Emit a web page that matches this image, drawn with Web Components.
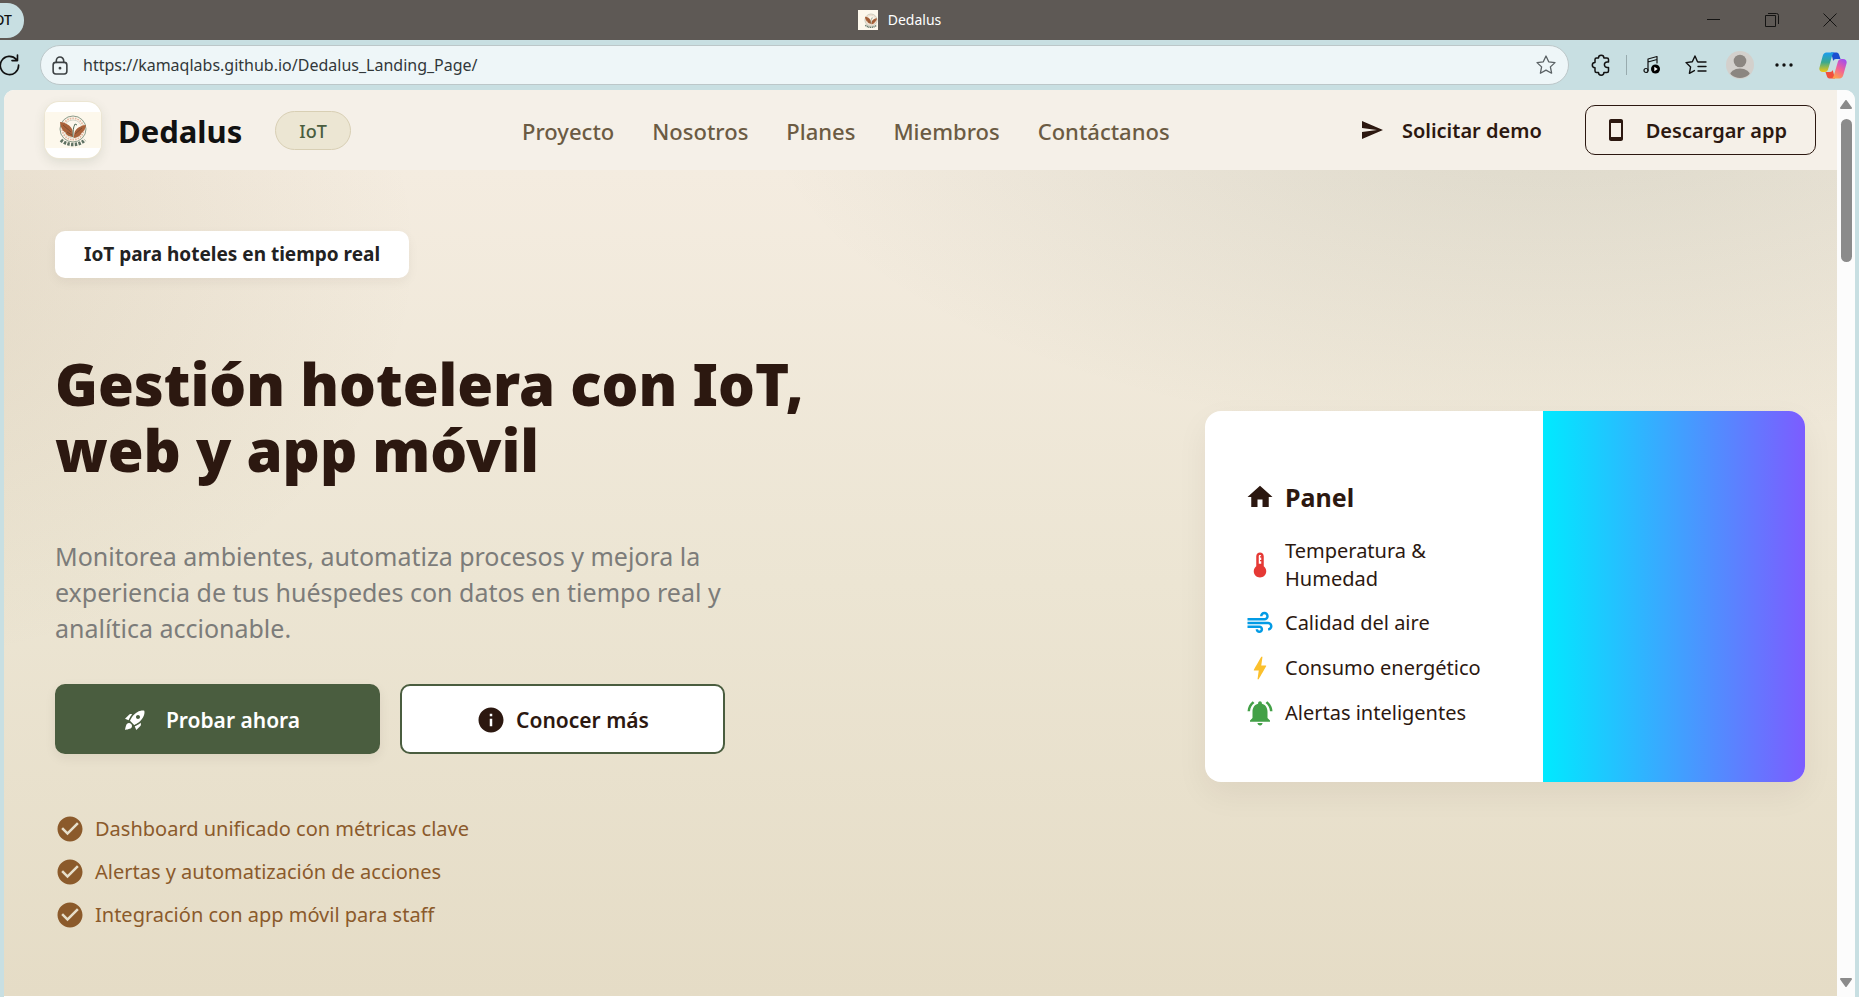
<!DOCTYPE html>
<html lang="es">
<head>
<meta charset="utf-8">
<title>Dedalus</title>
<style>
html,body{margin:0}
body{min-height:100vh;display:flex;flex-direction:column;background:#c8dfe2;font-family:"Noto Sans","Open Sans",sans-serif;color:#2c1810}
page-view{flex:1}
</style>
</head>
<body>
<window-titlebar></window-titlebar>
<browser-toolbar></browser-toolbar>
<page-view>
  <site-header></site-header>
  <hero-section></hero-section>
</page-view>
<script>
const define = (name, html) => {
  const tpl = document.createElement('template');
  tpl.innerHTML = html;
  customElements.define(name, class extends HTMLElement {
    constructor() {
      super();
      this.attachShadow({mode: 'open'}).append(tpl.content.cloneNode(true));
    }
  });
};

const ICONS = {
  home: 'M10 20v-6h4v6h5v-8h3L12 3 2 12h3v8z',
  send: 'M2.01 21L23 12 2.01 3 2 10l15 2-15 2z',
  phone: 'M17 1.01L7 1c-1.1 0-2 .9-2 2v18c0 1.1.9 2 2 2h10c1.1 0 2-.9 2-2V3c0-1.1-.9-1.99-2-1.99zM17 19H7V5h10v14z',
  rocket: 'M9.19 6.35c-2.04 2.29-3.44 5.58-3.57 5.89L2 10.69l4.05-4.05c.47-.47 1.15-.68 1.81-.55l1.33.26zM11.17 17s3.74-1.55 5.89-3.7c5.4-5.4 4.5-9.62 4.21-10.57-.95-.3-5.17-1.19-10.57 4.21C8.55 9.09 7 12.83 7 12.83L11.17 17zm6.48-2.19c-2.29 2.04-5.58 3.44-5.89 3.57L13.31 22l4.05-4.05c.47-.47.68-1.15.55-1.81l-.26-1.33zM9 18c0 .83-.34 1.58-.88 2.12C6.94 21.3 2 22 2 22s.7-4.94 1.88-6.12C4.42 15.34 5.17 15 6 15c1.66 0 3 1.34 3 3zm4-9c0-1.1.9-2 2-2s2 .9 2 2-.9 2-2 2-2-.9-2-2z',
  info: 'M12 2C6.48 2 2 6.48 2 12s4.48 10 10 10 10-4.48 10-10S17.52 2 12 2zm1 15h-2v-6h2v6zm0-8h-2V7h2v2z',
  check: 'M12 2C6.48 2 2 6.48 2 12s4.48 10 10 10 10-4.48 10-10S17.52 2 12 2zm-2 15l-5-5 1.41-1.41L10 14.17l7.59-7.59L19 8l-9 9z',
  thermometer: 'M15 13V5c0-1.66-1.34-3-3-3S9 3.34 9 5v8c-1.21.91-2 2.37-2 4 0 2.76 2.24 5 5 5s5-2.24 5-5c0-1.63-.79-3.09-2-4zm-4-8c0-.55.45-1 1-1s1 .45 1 1h-1v1h1v2h-1v1h1v2h-2V5z',
  air: 'M14.5 17c0 1.65-1.35 3-3 3s-3-1.35-3-3h2c0 .55.45 1 1 1s1-.45 1-1-.45-1-1-1H2v-2h9.5c1.65 0 3 1.35 3 3zM19 6.5C19 4.57 17.43 3 15.5 3S12 4.57 12 6.5h2c0-.83.67-1.5 1.5-1.5s1.5.67 1.5 1.5S16.33 8 15.5 8H2v2h13.5c1.93 0 3.5-1.57 3.5-3.5zm-.5 4.5H2v2h16.5c.83 0 1.5.67 1.5 1.5s-.67 1.5-1.5 1.5v2c1.93 0 3.5-1.57 3.5-3.5S20.43 11 18.5 11z',
  bolt: 'M11 21h-1l1-7H7.5c-.58 0-.57-.32-.38-.66.19-.34.05-.08.07-.12C8.48 10.94 10.42 7.54 13 3h1l-1 7h3.5c.49 0 .56.33.47.51l-.07.15C12.96 17.55 11 21 11 21z',
  bell: 'M7.58 4.08L6.15 2.65C3.75 4.48 2.17 7.3 2.03 10.5h2c.15-2.65 1.51-4.97 3.55-6.42zm12.39 6.42h2c-.15-3.2-1.73-6.02-4.12-7.85l-1.42 1.43c2.02 1.45 3.39 3.77 3.54 6.42zM18 11c0-3.07-1.64-5.64-4.5-6.32V4c0-.83-.67-1.5-1.5-1.5s-1.5.67-1.5 1.5v.68C7.63 5.36 6 7.92 6 11v5l-2 2v1h16v-1l-2-2v-5zm-6 11c.14 0 .27-.01.4-.04.65-.14 1.18-.58 1.44-1.18.1-.24.15-.5.15-.78h-4c.01 1.1.9 2 2.01 2z'
};

customElements.define('ui-icon', class extends HTMLElement {
  constructor() {
    super();
    this.attachShadow({mode: 'open'});
  }
  connectedCallback() {
    this.shadowRoot.innerHTML = `<style>
      :host{display:block;flex:none;width:var(--icon-size,24px);height:var(--icon-size,24px)}
      svg{display:block;width:100%;height:100%;fill:currentColor}
    </style><svg viewBox="0 0 24 24" aria-hidden="true"><path d="${ICONS[this.getAttribute('name')]}"/></svg>`;
  }
});

/* Round seal: ring of dots, two wings, and a curved base */
define('brand-logo', `<style>
  :host{display:block;flex:none}
  svg{display:block;width:100%;height:100%}
</style>
<svg viewBox="0 0 56 36" aria-hidden="true">
  <rect width="56" height="36" fill="#fdf8ec"/>
  <circle cx="28" cy="17" r="13" fill="none" stroke="#8b9b8a" stroke-width="1"/>
  <circle cx="28" cy="17" r="10.700" fill="none" stroke="#e3b8a2" stroke-width="1.800" stroke-dasharray="1.600 1"/>
  <circle cx="28" cy="17" r="9" fill="#fdf8ec" stroke="#b9c0b0" stroke-width=".6"/>
  <path d="M15 10c5 .5 11 3 12.500 8.500l.5 6.500c-5-.5-7-2.500-7.500-4.500-3-1.500-5-5.500-5.500-10.500z" fill="#a9623a"/>
  <path d="M41 13c-5 .5-10 3-11.500 7.500l-1 5.500c5-.5 7-2.500 8-5 2.500-1.500 4-4.500 4.500-8z" fill="#a9623a"/>
  <path d="M18 13l8 7M22 20l5 3M37 16l-7 6" stroke="#6b4630" stroke-width=".7"/>
  <path d="M28 25c0-6 0-9 2-13M30 12l2 1" fill="none" stroke="#56705c" stroke-width="1"/>
  <path d="M16 28c6 6 18 6 24 0" fill="none" stroke="#5f7264" stroke-width="3.500" stroke-dasharray="2.400 1.300"/>
</svg>`);

define('window-titlebar', `<style>
  :host{display:grid;grid-template-columns:1fr auto 1fr;height:40px;background:#5e5955;align-items:center}
  .tab{display:flex;justify-content:flex-end;align-items:center;box-sizing:border-box;width:24px;height:35px;padding-right:12px;overflow:hidden;
    background:#c8dfe2;border:0;border-radius:0 17px 17px 0;font:500 14px/20px "Noto Sans",sans-serif;color:#111}
  .title{display:flex;align-items:center;gap:10px;padding-right:60px;font-size:14px;line-height:20px;color:#fff}
  .fav{width:20px;height:20px;overflow:hidden;background:#fdf8ec;display:grid;place-items:center}
  .fav brand-logo{width:26px;height:17px}
  .win{display:flex;justify-content:flex-end}
  .win button{width:58px;height:40px;border:0;padding:0;background:none;display:grid;place-items:center}
  svg{fill:none;stroke:#151413;stroke-width:1}
</style>
<button class="tab">OT</button>
<div class="title"><span class="fav"><brand-logo></brand-logo></span><span>Dedalus</span></div>
<div class="win">
  <button aria-label="Minimizar"><svg width="14" height="14"><path d="M0 6.500h13"/></svg></button>
  <button aria-label="Restaurar"><svg width="14" height="14"><path d="M.5 2.500h10v11h-10zM3 .5h8.500q2 0 2 2V11"/></svg></button>
  <button aria-label="Cerrar"><svg width="14" height="14"><path d="M.5 .5l13 13M13.500 .5l-13 13"/></svg></button>
</div>`);

define('browser-toolbar', `<style>
  :host{display:flex;align-items:center;height:50px;padding:0 4px 0 0;background:#c8dfe2}
  button{border:0;padding:0;background:none;display:grid;place-items:center;color:#111}
  svg{display:block;fill:none;stroke:currentColor;stroke-width:1.500;stroke-linecap:round;stroke-linejoin:round}
  .reload{width:20px;height:40px;margin-right:20px}
  .bar{flex:1;display:flex;align-items:center;box-sizing:border-box;height:40px;padding:0 10px 0 11px;border:1px solid #bcc7c9;border-radius:20px;background:#eef6f8;color:#3c4143}
  input{flex:1;min-width:0;border:0;outline:0;padding:0;margin-left:15px;background:none;font:16px/24px "Noto Sans",sans-serif;color:#32383a}
  .star{width:24px;height:24px;color:#5a6164}
  .tools{display:flex;align-items:center;padding-left:10px}
  .tools button{width:44px;height:40px}
  .sep{width:1px;height:20px;margin:0 3px;background:#98abae}
  .tools .copilot{margin-left:5px}
</style>
<button class="reload" aria-label="Actualizar"><svg width="20" height="22" viewBox="0 0 18 20"><path d="M14.800 5A8.300 8.300 0 1 0 16.800 10M15.800 1v5h-5"/></svg></button>
<div class="bar">
  <svg width="16" height="19" viewBox="0 0 15 18"><rect x="1" y="6" width="13" height="11" rx="2.500"/><path d="M4 6V4.500a3.500 3.500 0 0 1 7 0V6"/><circle cx="7.500" cy="11.500" r=".6" fill="currentColor"/></svg>
  <input type="text" aria-label="Dirección" value="https://kamaqlabs.github.io/Dedalus_Landing_Page/">
  <button class="star" aria-label="Favorito"><svg width="20" height="20" viewBox="0 0 20 20" style="stroke-width:1.300"><path d="M10 1l2.700 5.800 6.300.8-4.600 4.300 1.200 6.300L10 15.100l-5.600 3.100 1.200-6.300L1 7.600l6.300-.8z"/></svg></button>
</div>
<div class="tools">
  <button aria-label="Extensiones"><svg width="20" height="22" viewBox="0 0 20 22"><path d="M5.500 4H7.500a2.700 2.700 0 0 1 5.400 0H16q1.500 0 1.500 1.500V8h-1.300a2.800 2.800 0 0 0 0 5.600H17.500V17q0 1.500-1.500 1.500h-3.100a2.700 2.700 0 0 1-5.400 0H5.500Q4 18.500 4 17v-3.200a2.700 2.700 0 0 1 0-5.400V5.500Q4 4 5.500 4z"/></svg></button>
  <span class="sep"></span>
  <button aria-label="Multimedia"><svg width="18" height="20" viewBox="0 0 18 20" style="stroke-width:1.200"><path d="M5 15.500V4l9-2.500V8M5 7l9-2.500"/><circle cx="3" cy="15.500" r="2"/><circle cx="12.500" cy="14" r="4.500" fill="#000" stroke="none"/><path d="M11.300 11.800l3.400 2.200-3.400 2.200z" fill="#fff" stroke="none"/></svg></button>
  <button aria-label="Favoritos"><svg width="22" height="20" viewBox="0 0 22 20" style="stroke-width:1.400"><path d="M12.500 6.800L10 1 7.300 6.800 1 7.600l4.600 4.300-1.200 6.500 5-2.800M13 7h8M13 11.500h8M13 16h8"/></svg></button>
  <button aria-label="Perfil"><svg width="28" height="28" viewBox="0 0 28 28" style="stroke:none"><defs><clipPath id="a"><circle cx="14" cy="14" r="13"/></clipPath></defs><circle cx="14" cy="14" r="14" fill="#d3d0cc"/><circle cx="14" cy="10" r="6.300" fill="#8b8681"/><ellipse cx="14" cy="25" rx="10.500" ry="7.500" fill="#8b8681" clip-path="url(#a)"/></svg></button>
  <button aria-label="Configuración"><svg width="18" height="4" viewBox="0 0 18 4"><g fill="#111" stroke="none"><circle cx="2" cy="2" r="1.700"/><circle cx="9" cy="2" r="1.700"/><circle cx="16" cy="2" r="1.700"/></g></svg></button>
  <button class="copilot" aria-label="Copilot"><svg width="28" height="27" viewBox="0 0 28 27" style="stroke:none">
    <defs>
      <linearGradient id="l" x1="0" y1="0" x2="0" y2="1"><stop offset="0" stop-color="#1b9cf0"/><stop offset=".5" stop-color="#3aa98f"/><stop offset="1" stop-color="#f2c80f"/></linearGradient>
      <linearGradient id="r" x1=".8" y1="0" x2=".3" y2="1"><stop offset="0" stop-color="#a04df0"/><stop offset=".5" stop-color="#f0609a"/><stop offset="1" stop-color="#ffa24a"/></linearGradient>
    </defs>
    <path d="M12 .5h5.500c1.600 0 2.200 1 2.700 2.500L21.500 7H17c-1.500 0-2.200.7-2.700 2z" fill="#1c4fd0"/>
    <path d="M16 26.500h-5.500c-1.600 0-2.200-1-2.700-2.500L6.500 20H11c1.500 0 2.200-.7 2.700-2z" fill="#f04f3c"/>
    <path d="M7.500.5h8c-1.500.5-2 2-2.500 3.500L9.500 16c-.7 2.500-1.500 4-4 4H4c-3 0-4.200-2-3.500-4.500L3.700 4C4.300 1.700 5.500.5 7.500.5z" fill="url(#l)"/>
    <path d="M20.500 26.500h-8c1.500-.5 2-2 2.500-3.500L18.500 11c.7-2.500 1.500-4 4-4H24c3 0 4.200 2 3.500 4.500L24.300 23c-.6 2.300-1.800 3.500-3.800 3.500z" fill="url(#r)"/>
  </svg></button>
</div>`);

define('page-view', `<style>
  :host{display:flex;margin:0 4px;border-radius:10px 10px 0 0;overflow:hidden;background:#fff}
  .doc{flex:1;min-width:0;display:flex;flex-direction:column;padding-bottom:1px}
  ::slotted(hero-section){flex:1}
  .scroll{display:flex;flex-direction:column;align-items:center;box-sizing:border-box;width:18px;padding:10px 0;background:#fcfcfc}
  .thumb{width:11px;height:143px;margin-top:10px;border-radius:6px;background:#8b8b8b}
  .space{flex:1}
  svg{display:block;fill:#8b8b8b;stroke:#8b8b8b;stroke-width:2;stroke-linejoin:round}
</style>
<div class="doc"><slot></slot></div>
<div class="scroll" aria-hidden="true">
  <svg width="12" height="9"><path d="M6 1l5 7H1z"/></svg>
  <div class="thumb"></div>
  <div class="space"></div>
  <svg width="12" height="9"><path d="M6 8l5-7H1z"/></svg>
</div>`);

define('site-header', `<style>
  :host{display:flex;align-items:center;justify-content:space-between;box-sizing:border-box;height:80px;padding:0 21px 0 41px;background:#f5f0e8}
  .brand{display:flex;align-items:center}
  .logo{display:grid;align-items:center;width:56px;height:56px;border-radius:14px;overflow:hidden;background:#fff;box-shadow:0 0 0 1px #ece6d3}
  .shade{border-radius:14px;box-shadow:0 4px 12px rgba(74,93,63,.14)}
  .logo brand-logo{width:56px;height:36px}
  .name{margin-left:17px;padding-top:2px;font-size:31px;font-weight:700;line-height:44px;color:#111}
  .pill{margin-left:33px;padding:1px 23px 0;border:1px solid #d8cfb4;border-radius:20px;background:#ece6d3;font-size:18px;font-weight:500;line-height:36px;color:#4a5d3f}
  nav{display:flex;gap:38px;padding-top:2px}
  a{color:#6b5b43;text-decoration:none;font-size:22px;font-weight:500;line-height:32px}
  .actions{display:flex;align-items:center;gap:14px}
  button{display:flex;align-items:center;gap:18px;box-sizing:border-box;height:50px;padding:0 28px 0 18px;border:1px solid transparent;border-radius:10px;background:none;
    font:600 20px/28px "Noto Sans",sans-serif;color:#2c1810}
  .line{border-color:#2c1810}
  button span{padding-top:2px}
</style>
<div class="brand">
  <div class="shade"><div class="logo"><brand-logo></brand-logo></div></div>
  <span class="name">Dedalus</span><span class="pill">IoT</span>
</div>
<nav><a href="#proyecto">Proyecto</a><a href="#nosotros">Nosotros</a><a href="#planes">Planes</a><a href="#miembros">Miembros</a><a href="#contactanos">Contáctanos</a></nav>
<div class="actions">
  <button><ui-icon name="send"></ui-icon><span>Solicitar demo</span></button>
  <button class="line"><ui-icon name="phone"></ui-icon><span>Descargar app</span></button>
</div>`);

define('icon-row', `<style>
  :host{display:flex;align-items:center;gap:10px;--icon-size:30px;font-size:20px;line-height:28px}
</style><slot name="icon"></slot><slot></slot>`);

define('panel-card', `<style>
  :host{display:flex;width:600px;border-radius:16px;overflow:hidden;background:#fff;box-shadow:0 12px 32px rgba(44,24,16,.06)}
  .info{flex:1;display:flex;flex-direction:column;gap:15px;padding:69px 40px 54px}
  h2{display:flex;align-items:center;gap:10px;margin:0 0 8px;font-size:25px;line-height:34px;font-weight:700;--icon-size:30px}
  .art{width:262px;background:linear-gradient(90deg,#00eaff,#7c5cff)}
</style>
<div class="info">
  <h2><ui-icon name="home"></ui-icon>Panel</h2>
  <icon-row><ui-icon slot="icon" name="thermometer" style="color:#e53935"></ui-icon>Temperatura &amp; Humedad</icon-row>
  <icon-row><ui-icon slot="icon" name="air" style="color:#039be5"></ui-icon>Calidad del aire</icon-row>
  <icon-row><ui-icon slot="icon" name="bolt" style="color:#fbc02d"></ui-icon>Consumo energético</icon-row>
  <icon-row><ui-icon slot="icon" name="bell" style="color:#43a047"></ui-icon>Alertas inteligentes</icon-row>
</div>
<div class="art"></div>`);

define('hero-section', `<style>
  :host{display:flex;align-items:center;justify-content:space-between;gap:40px;padding:60px 32px 34px 51px;background:
    radial-gradient(1350px 600px at 85% -10%,rgba(74,93,63,.15),transparent 60%),
    radial-gradient(1000px 700px at -10% 10%,rgba(130,105,50,.14),transparent 60%),
    linear-gradient(180deg,#f4ece0 0%,#ece5d3 50%,#e5dcc6 100%)}
  .copy{padding-bottom:32px}
  .chip{width:fit-content;padding:10px 29px;border-radius:10px;background:#fff;box-shadow:0 4px 12px rgba(44,24,16,.05);font-size:19px;line-height:27px;font-weight:700;color:#222}
  h1{margin:73px 0 55px;font-size:58px;line-height:66px;font-weight:900;color:#2c1810}
  p{margin:0 0 38px;max-width:690px;font-size:25px;line-height:36px;color:#7c7c7a}
  .cta{display:flex;gap:20px}
  .cta button{display:flex;align-items:center;justify-content:center;gap:10px;box-sizing:border-box;width:325px;height:70px;padding:2px 0 0;border:2px solid #4a5d3f;border-radius:10px;background:#fff;
    font:600 21px/30px "Noto Sans",sans-serif;color:#2c1810;--icon-size:30px}
  .cta .primary{gap:19px;padding-right:12px;background:#4a5d3f;color:#fff;--icon-size:24px;box-shadow:0 4px 12px rgba(44,24,16,.07)}
  ul{display:flex;flex-direction:column;gap:13px;margin:60px 0 0;padding:0;list-style:none;color:#8b5a2b}
</style>
<div class="copy">
  <div class="chip">IoT para hoteles en tiempo real</div>
  <h1>Gestión hotelera con IoT,<br>web y app móvil</h1>
  <p>Monitorea ambientes, automatiza procesos y mejora la experiencia de tus huéspedes con datos en tiempo real y analítica accionable.</p>
  <div class="cta">
    <button class="primary"><ui-icon name="rocket"></ui-icon>Probar ahora</button>
    <button><ui-icon name="info"></ui-icon>Conocer más</button>
  </div>
  <ul>
    <li><icon-row><ui-icon slot="icon" name="check"></ui-icon>Dashboard unificado con métricas clave</icon-row></li>
    <li><icon-row><ui-icon slot="icon" name="check"></ui-icon>Alertas y automatización de acciones</icon-row></li>
    <li><icon-row><ui-icon slot="icon" name="check"></ui-icon>Integración con app móvil para staff</icon-row></li>
  </ul>
</div>
<panel-card></panel-card>`);
</script>
</body>
</html>
